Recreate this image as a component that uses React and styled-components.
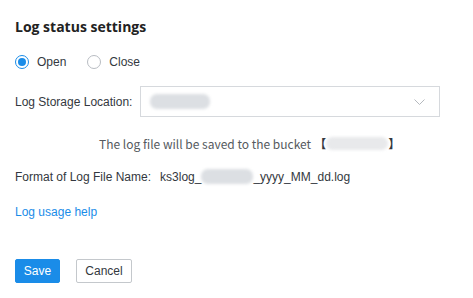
import React, { useState } from "react";
import styled, { createGlobalStyle } from "styled-components";

const GlobalStyle = createGlobalStyle`
	body {
		margin: 0;
		background: #ffffff;
		font-family: "Liberation Sans", Arial, sans-serif;
		color: #333840;
	}
`;

const Panel = styled.div`
	width: 473px;
	height: 298px;
	box-sizing: border-box;
	padding: 16px 15px 0 15px;
	display: flex;
	flex-direction: column;
`;

const Title = styled.h2`
	margin: 0;
	font-family: "Open Sans", "Noto Sans", sans-serif;
	font-size: 14px;
	font-weight: 700;
	line-height: 22px;
	color: #222;
`;

const RadioGroup = styled.div`
	display: flex;
	align-items: center;
	gap: 21px;
	margin-top: 14px;
	height: 20px;
`;

const RadioLabel = styled.label`
	display: flex;
	align-items: center;
	gap: 8px;
	font-size: 12px;
	color: #333840;
	cursor: pointer;
`;

const RadioDot = styled.span`
	width: 12px;
	height: 12px;
	border-radius: 50%;
	border: 1px solid ${(p) => (p.checked ? "#1a8ce8" : "#b8bcc2")};
	display: flex;
	align-items: center;
	justify-content: center;
	box-sizing: content-box;

	&::after {
		content: "";
		width: 8px;
		height: 8px;
		border-radius: 50%;
		background: ${(p) => (p.checked ? "#1a8ce8" : "transparent")};
	}
`;

const FieldRow = styled.div`
	display: flex;
	align-items: center;
	margin-top: ${(p) => p.top || 0}px;
	font-size: 12px;
`;

const Label = styled.span`
	width: 125px;
	color: #333840;
`;

const Select = styled.div`
	width: 300px;
	height: 31px;
	box-sizing: border-box;
	border: 1px solid #d6d9dd;
	display: flex;
	align-items: center;
	justify-content: space-between;
	padding: 0 14px 0 9px;
`;

const Blur = styled.span`
	display: inline-block;
	width: ${(p) => p.w}px;
	height: ${(p) => p.h || 14}px;
	background: ${(p) => p.bg || "#dcdfe3"};
	border-radius: 7px;
	filter: blur(1.5px);
	vertical-align: middle;
`;

const Hint = styled.div`
	margin-top: 17px;
	padding-left: 84px;
	font-family: "Noto Sans CJK SC", "Noto Sans", sans-serif;
	font-size: 12px;
	color: #555a60;
	display: flex;
	align-items: center;
	height: 18px;
`;

const Bracket = styled.span`
	font-weight: 700;
	color: #333840;
	margin-left: ${(p) => p.ml || 0}px;
`;

const Value = styled.span`
	display: flex;
	align-items: center;
	color: #333840;
	margin-left: 9px;
`;

const HelpLink = styled.a`
	margin-top: 19px;
	font-size: 12px;
	color: #1a8ce8;
	text-decoration: none;
	line-height: 18px;
	width: fit-content;
`;

const Actions = styled.div`
	display: flex;
	gap: 16px;
	margin-top: 38px;
`;

const Button = styled.button`
	height: 24px;
	padding: 0;
	box-sizing: border-box;
	font-family: "Liberation Sans", Arial, sans-serif;
	font-size: 12px;
	border-radius: 2px;
	border: 1px solid ${(p) => (p.primary ? "#1a8ce8" : "#c4c8cc")};
	background: ${(p) => (p.primary ? "#1a8ce8" : "#fff")};
	color: ${(p) => (p.primary ? "#fff" : "#333840")};
	width: ${(p) => p.w}px;
`;

const App = () => {
	const [open, setOpen] = useState(true);

	return (
		<>
			<GlobalStyle />
			<Panel>
				<Title>Log status settings</Title>
				<RadioGroup>
					<RadioLabel onClick={() => setOpen(true)}>
						<RadioDot checked={open} />
						Open
					</RadioLabel>
					<RadioLabel onClick={() => setOpen(false)}>
						<RadioDot checked={!open} />
						Close
					</RadioLabel>
				</RadioGroup>
				<FieldRow top={14}>
					<Label>Log Storage Location:</Label>
					<Select>
						<Blur w={60} h={15} />
						<svg width="11" height="6" viewBox="0 0 11 6">
							<path d="M0.5 0.5 L5.5 5.5 L10.5 0.5" fill="none" stroke="#b5b9be" strokeWidth="1" />
						</svg>
					</Select>
				</FieldRow>
				<Hint>
					The log file will be saved to the bucket
					<Bracket ml={3}>【</Bracket>
					<Blur w={62} h={13} bg="#e8e9eb" />
					<Bracket>】</Bracket>
				</Hint>
				<FieldRow top={17}>
					<span>Format of Log File Name:</span>
					<Value>
						ks3log_
						<Blur w={52} h={15} />
						_yyyy_MM_dd.log
					</Value>
				</FieldRow>
				<HelpLink href="#">Log usage help</HelpLink>
				<Actions>
					<Button primary w={45}>
						Save
					</Button>
					<Button w={56}>Cancel</Button>
				</Actions>
			</Panel>
		</>
	);
};

export default App;
